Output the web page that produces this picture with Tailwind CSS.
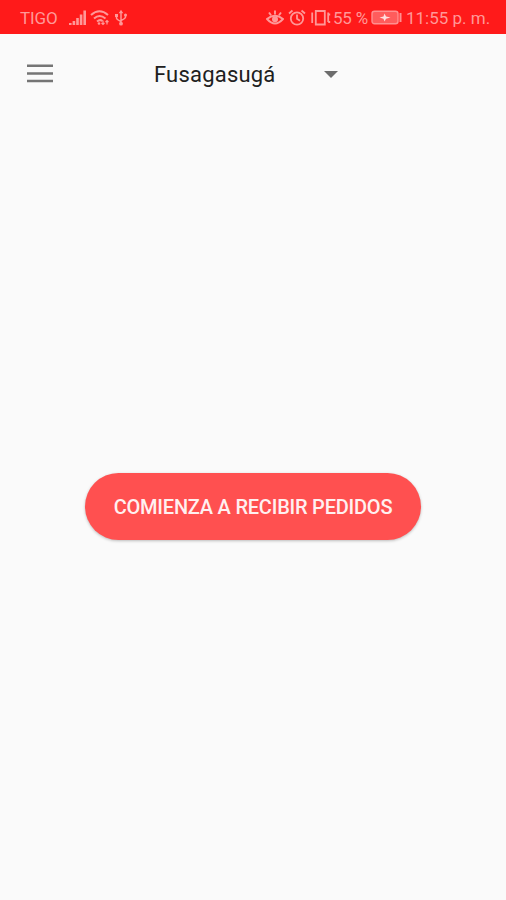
<!DOCTYPE html>
<html lang="es">
<head>
<meta charset="utf-8">
<title>Pedidos</title>
<script src="https://cdn.jsdelivr.net/npm/@tailwindcss/browser@4"></script>
</head>
<body class="flex h-[900px] w-[506px] flex-col overflow-hidden bg-[#fafafa] font-['Roboto',sans-serif]">
<header class="flex h-[34px] shrink-0 items-center bg-[#ff1a1a] pl-5 pt-[2px] text-[17px] leading-5 text-[#ff9898]">
  <span class="w-[48px] tracking-[-0.1px]">TIGO</span>
  <svg class="h-[18px] w-[20px]" viewBox="0 0 20 18" fill="currentColor"><path d="M1 14h2.600v2H1zM4.600 12h2.600v4H4.600zM8.200 9h2.600v7H8.200zM11.800 5.500h2.600V16h-2.600zM15.400 1.500H18V16h-2.600z"/></svg>
  <svg class="ml-[2px] h-[18px] w-[20px]" viewBox="0 0 20 18" fill="none" stroke="currentColor" stroke-width="2"><path d="M1 6q8.500-7.500 17 0M4 9.500q5.500-5 11.500 0M7 12.500q3-2.500 5.500-.5"/><circle cx="9" cy="14.500" r="1.300" fill="currentColor" stroke="none"/><path d="M13 11.500v4M11.500 14l1.500 1.500 1.500-1.500M17 15.500v-4M15.500 13l1.500-1.500 1.500 1.500" stroke-width="1.200"/></svg>
  <svg class="ml-[4px] h-[18px] w-[14px]" viewBox="0 0 14 18" fill="none" stroke="currentColor" stroke-width="1.500"><path d="M7 3v12M2.500 6.500V9Q2.500 10.500 7 12.500M11.500 5.500V8Q11.500 9.500 7 11.500"/><path d="M4.700 4.200 7 .8l2.300 3.400zM1 5h3v3H1z" fill="currentColor" stroke="none"/><circle cx="11.500" cy="6" r="1.500" fill="currentColor" stroke="none"/><circle cx="7" cy="14.700" r="1.900" fill="currentColor" stroke="none"/></svg>
  <svg class="ml-[138px] h-[18px] w-[18px]" viewBox="0 0 18 18" fill="none" stroke="currentColor" stroke-width="1.900"><path d="M1 10Q9 3.500 17 10 9 19 1 10z"/><path d="M9 1.500v4M3 3.500l2 2.700M15 3.500l-2 2.700"/><circle cx="9" cy="10.300" r="3" fill="currentColor" stroke="none"/></svg>
  <svg class="ml-[4px] h-[18px] w-[18px]" viewBox="0 0 18 18" fill="none" stroke="currentColor" stroke-width="1.800"><circle cx="9" cy="9.500" r="6.200"/><path d="M9 5.500v4.200l3 2M1 4.500 4.500 1.500M17 4.500l-3.500-3"/></svg>
  <svg class="ml-[4px] h-[18px] w-[21px]" viewBox="0 0 21 18" fill="none" stroke="currentColor" stroke-width="1.800"><path d="M5.800 2h9v13.500h-9zM2.200 3.500V14M18.200 3.500V13M18.200 5.500h2M18.200 13h2"/></svg>
  <span class="ml-[2px] w-[38px] whitespace-nowrap tracking-[-0.2px]">55 %</span>
  <svg class="h-[18px] w-[32px]" viewBox="0 0 32 18" fill="none"><rect x="1" y="2.200" width="26" height="12.600" rx="2.500" fill="#ff5c5c" stroke="#ff9090" stroke-width="1.400"/><path d="M8.500 8.500 12.500 7.500 13.500 4.500l1.500 3 4.500 1-4.500 1.300-1.500 2.700-1-2.700z" fill="#ffe0e0"/><path d="M29.500 4v9" stroke="#ff9090" stroke-width="2"/></svg>
  <span class="ml-[3px] whitespace-nowrap">11:55 p. m.</span>
</header>
<nav class="flex h-[80px] shrink-0 items-center pl-[26px]">
  <svg class="h-[20px] w-[28px]" viewBox="0 0 28 20" fill="#757575"><path d="M1 .5h26v2.600H1zM1 8.200h26v2.600H1zM1 15.700h26v2.600H1z"/></svg>
  <button class="ml-[100px] flex items-center text-[22px] text-[#202020]"><span class="w-[170px] text-left tracking-[0.2px]">Fusagasugá</span>
    <svg class="h-[7px] w-[14px]" viewBox="0 0 14 7" fill="#6c6c6c"><path d="M0 0h14L7 7z"/></svg>
  </button>
</nav>
<main class="flex flex-1 flex-col items-center pt-[359px]">
  <button class="h-[67px] w-[336px] shrink-0 whitespace-nowrap rounded-full bg-[#ff5050] pt-px text-[20px] font-medium tracking-[-0.22px] text-[#fff0f0] shadow-[0_1px_3px_rgba(0,0,0,0.25)]">COMIENZA A RECIBIR PEDIDOS</button>
</main>
</body>
</html>
